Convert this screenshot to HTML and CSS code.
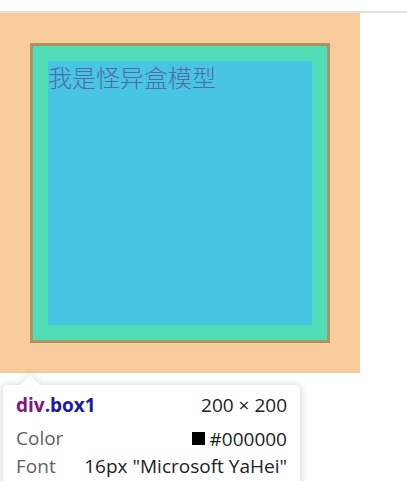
FILE: index.html
```html
<!DOCTYPE html>
<html>
<head>
<meta charset="utf-8">
<link rel="stylesheet" href="styles.css">
</head>
<body>
<div class="topbar"></div>
<div class="margin-area">
  <div class="box1">我是怪异盒模型</div>
</div>
<div class="tooltip">
  <div class="arrow"></div>
  <div class="row row-head">
    <span class="sel"><span class="tag">div</span><span class="cls">.box1</span></span>
    <span class="val">200 × 200</span>
  </div>
  <div class="row">
    <span class="label">Color</span>
    <span class="val"><span class="swatch"></span>#000000</span>
  </div>
  <div class="row">
    <span class="label">Font</span>
    <span class="val">16px "Microsoft YaHei"</span>
  </div>
</div>
</body>
</html>
```
FILE: styles.css
```css
html, body {
  margin: 0;
  padding: 0;
  background: #ffffff;
  overflow: hidden;
}
body {
  width: 407px;
  height: 481px;
  position: relative;
  font-family: "Noto Sans CJK SC", sans-serif;
}
.topbar {
  height: 11px;
  border-bottom: 2px solid #e2e2e2;
}
.margin-area {
  width: 360px;
  height: 360px;
  box-sizing: border-box;
  padding: 30px;
  background: #f8cc9d;
}
.box1 {
  box-sizing: border-box;
  width: 300px;
  height: 300px;
  border: 3px solid #ad9263;
  padding: 15px;
  background: #48c4e5;
  box-shadow: inset 0 0 0 15px #50ddb5;
  color: #4f6d9c;
  font-size: 24px;
  line-height: 32px;
  font-weight: 300;
  font-family: "Noto Sans CJK SC", sans-serif;
}
.tooltip {
  position: absolute;
  left: 3px;
  top: 385px;
  width: 297px;
  height: 110px;
  box-sizing: border-box;
  background: #fff;
  border-radius: 5px;
  box-shadow: 0 1px 8px rgba(0, 0, 0, 0.22);
  padding: 6px 13px 0 13px;
  font-family: "Open Sans", sans-serif;
  font-size: 19px;
}
.arrow {
  position: absolute;
  left: 20px;
  top: -7px;
  width: 14px;
  height: 14px;
  background: #fff;
  transform: rotate(45deg);
  box-shadow: -3px -3px 6px rgba(0, 0, 0, 0.08);
}
.row {
  position: relative;
  display: flex;
  justify-content: space-between;
  align-items: baseline;
  height: 28px;
  line-height: 28px;
}
.row-head {
  margin-bottom: 5px;
}
.sel {
  font-weight: 700;
}
.tag {
  color: #881280;
}
.cls {
  color: #1a1aa6;
}
.val {
  color: #222;
  display: flex;
  align-items: center;
}
.label {
  color: #5f5f5f;
}
.swatch {
  display: inline-block;
  width: 13px;
  height: 13px;
  background: #000;
  margin-right: 5px;
}
```
